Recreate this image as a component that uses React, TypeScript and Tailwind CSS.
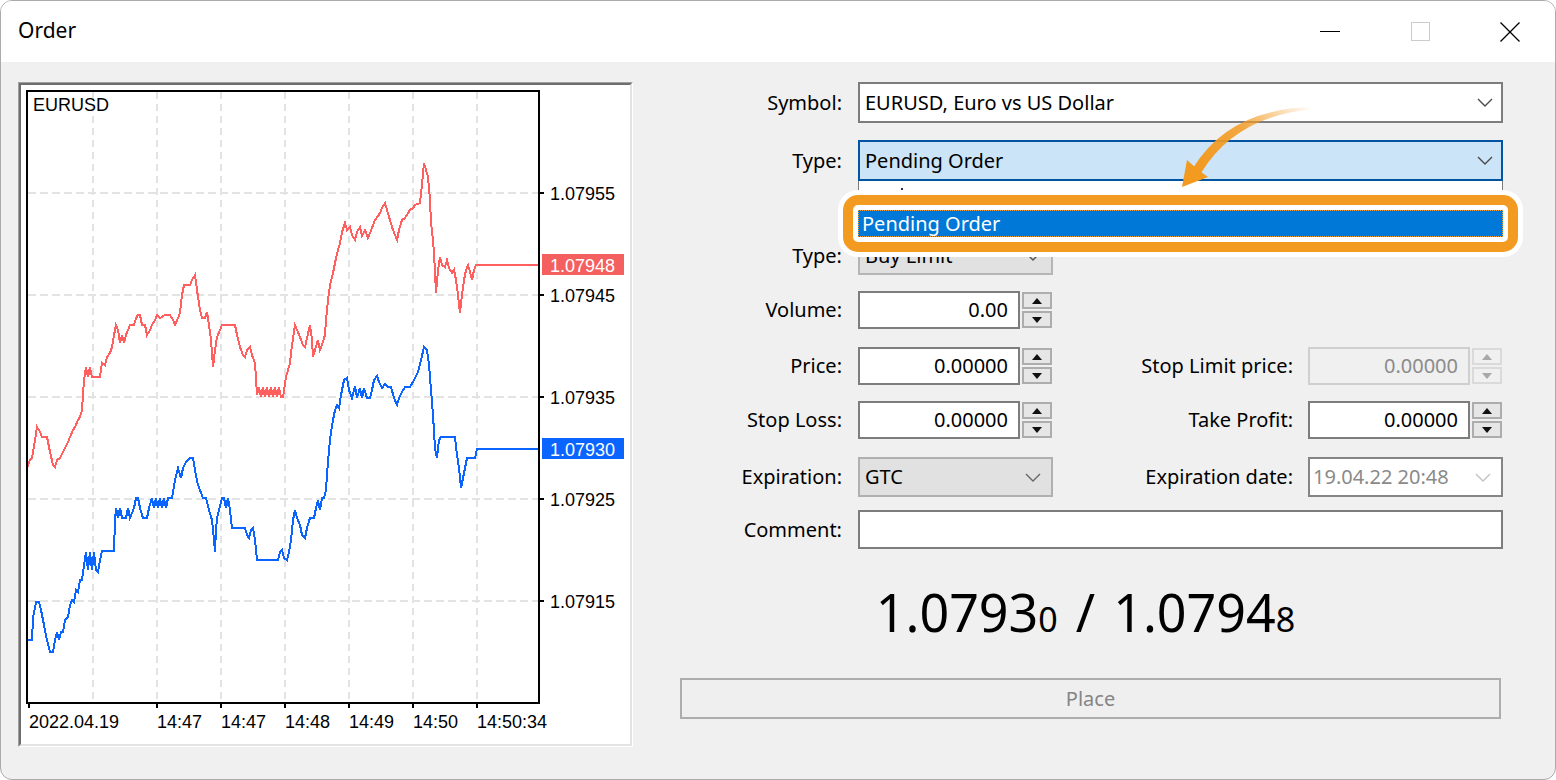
import React from 'react';

type Pt = [number, number];

// traced tick lines (page coordinates)
const blue: Pt[] = [
  [27, 640], [32, 640], [33, 618], [36, 602], [39, 602], [41, 610], [44, 625], [47, 640], [50, 652], [53, 652],
  [55, 640], [57, 632], [59, 640], [61, 632], [63, 632], [65, 620], [68, 617], [70, 605], [72, 600], [74, 602],
  [76, 590], [78, 592], [80, 580], [82, 580], [84, 565], [86, 552], [88, 570], [90, 552], [92, 570], [94, 552],
  [96, 570], [98, 572], [100, 560], [102, 551], [114, 551], [115, 520], [116, 508], [118, 518], [120, 508],
  [122, 518], [126, 518], [128, 508], [130, 518], [134, 508], [136, 498], [138, 498], [140, 508], [143, 518],
  [147, 518], [149, 508], [152, 498], [154, 508], [156, 498], [158, 508], [160, 498], [162, 508], [164, 498],
  [166, 508], [168, 498], [172, 498], [175, 480], [178, 468], [181, 478], [183, 468], [186, 462], [190, 458],
  [193, 458], [195, 470], [198, 485], [200, 490], [203, 498], [206, 498], [209, 510], [212, 520], [214, 540],
  [215, 552], [216, 530], [217, 518], [220, 506], [222, 498], [224, 498], [226, 508], [228, 498], [230, 510],
  [232, 528], [245, 528], [247, 535], [249, 538], [251, 530], [253, 528], [255, 540], [257, 560], [278, 560],
  [280, 552], [282, 550], [284, 558], [287, 560], [289, 552], [291, 540], [293, 520], [295, 510], [297, 518],
  [300, 525], [302, 535], [305, 538], [307, 528], [310, 518], [314, 518], [316, 508], [318, 500], [320, 510],
  [322, 498], [324, 498], [326, 490], [327, 475], [329, 450], [331, 432], [333, 420], [335, 410], [337, 405],
  [339, 408], [341, 395], [344, 380], [347, 378], [349, 390], [352, 398], [355, 386], [357, 398], [360, 388],
  [362, 398], [364, 388], [367, 398], [370, 398], [372, 390], [374, 380], [377, 376], [379, 382], [382, 388],
  [385, 384], [388, 387], [391, 387], [394, 398], [397, 405], [399, 398], [402, 392], [405, 387], [410, 387],
  [414, 380], [418, 372], [421, 360], [424, 347], [427, 350], [429, 365], [431, 390], [433, 415], [435, 448],
  [437, 458], [439, 440], [441, 437], [455, 437], [457, 455], [459, 468], [461, 488], [463, 478], [465, 468],
  [467, 458], [475, 458], [477, 449], [539, 449],
];

const red: Pt[] = [
  [27, 468], [30, 460], [32, 458], [35, 440], [37, 427], [40, 432], [42, 437], [47, 437], [50, 452], [53, 465],
  [55, 467], [57, 460], [60, 458], [63, 452], [65, 448], [68, 442], [70, 437], [73, 430], [75, 427], [78, 420],
  [80, 417], [82, 410], [84, 380], [86, 367], [88, 377], [90, 367], [92, 377], [100, 377], [102, 363], [105, 365],
  [107, 357], [110, 353], [112, 347], [114, 335], [116, 325], [118, 330], [120, 343], [122, 335], [124, 343],
  [126, 335], [128, 330], [130, 325], [134, 325], [136, 318], [138, 315], [140, 315], [142, 325], [145, 325],
  [147, 335], [150, 330], [152, 325], [155, 320], [157, 315], [160, 318], [165, 315], [170, 315], [173, 320],
  [175, 325], [178, 318], [180, 313], [182, 295], [184, 285], [190, 285], [192, 280], [195, 275], [197, 290],
  [200, 310], [202, 318], [205, 318], [207, 312], [209, 325], [211, 340], [213, 367], [215, 350], [217, 337],
  [220, 330], [222, 325], [235, 325], [237, 335], [240, 347], [243, 355], [245, 357], [247, 350], [250, 347],
  [252, 355], [255, 363], [257, 395], [259, 387], [261, 397], [263, 387], [265, 397], [267, 387], [269, 397],
  [271, 387], [273, 397], [275, 387], [277, 397], [279, 387], [281, 397], [283, 397], [286, 377], [288, 370],
  [290, 363], [292, 345], [295, 325], [297, 330], [300, 337], [303, 345], [305, 347], [307, 338], [310, 325],
  [312, 340], [313, 357], [315, 350], [318, 340], [320, 350], [322, 345], [325, 335], [326, 320], [328, 300],
  [330, 285], [333, 273], [336, 258], [338, 250], [340, 243], [342, 232], [345, 223], [347, 230], [350, 227],
  [352, 235], [355, 240], [357, 232], [360, 227], [362, 236], [365, 230], [368, 238], [370, 233], [372, 228],
  [375, 220], [378, 216], [380, 213], [382, 208], [385, 203], [387, 210], [390, 220], [393, 230], [397, 240],
  [399, 230], [402, 220], [405, 218], [408, 213], [410, 210], [413, 208], [415, 205], [420, 203], [422, 185],
  [424, 163], [426, 170], [428, 177], [430, 200], [431, 223], [433, 240], [434, 253], [436, 293], [438, 270],
  [440, 257], [442, 265], [445, 267], [447, 260], [449, 268], [452, 273], [454, 270], [456, 280], [458, 295],
  [460, 313], [462, 295], [464, 280], [466, 270], [468, 265], [470, 272], [472, 280], [474, 270], [476, 265],
  [539, 265],
];

const pts = (a: Pt[]) => a.map((p) => p.join(',')).join(' ');

const vGrid = [93, 157, 221, 285, 349, 413, 477];
const hGrid = [
  { y: 193, label: '1.07955' },
  { y: 295, label: '1.07945' },
  { y: 397, label: '1.07935' },
  { y: 499, label: '1.07925' },
  { y: 601, label: '1.07915' },
];
const times = [
  { x: 29, t: '2022.04.19' },
  { x: 157, t: '14:47' },
  { x: 221, t: '14:47' },
  { x: 285, t: '14:48' },
  { x: 349, t: '14:49' },
  { x: 413, t: '14:50' },
  { x: 477, t: '14:50:34' },
];

const chartFont = "'Liberation Sans', Arial, sans-serif";

const Chart: React.FC = () => (
  <svg width={609} height={659} viewBox="21 85 609 659" className="block">
    {/* grid */}
    {vGrid.map((x) => (
      <line key={x} x1={x} y1={92} x2={x} y2={702} stroke="#e3e3e3" strokeWidth={2} strokeDasharray="7 5" />
    ))}
    {hGrid.map((g) => (
      <line key={g.y} x1={28} y1={g.y} x2={538} y2={g.y} stroke="#e3e3e3" strokeWidth={2} strokeDasharray="8 4" />
    ))}

    <polyline points={pts(red)} fill="none" stroke="#ff5f5f" strokeWidth={2} shapeRendering="crispEdges" />
    <polyline points={pts(blue)} fill="none" stroke="#0a64ff" strokeWidth={2} shapeRendering="crispEdges" />

    {/* frame */}
    <rect x={27} y={91} width={512} height={612} fill="none" stroke="#000" strokeWidth={2} />
    {hGrid.map((g) => (
      <line key={g.y} x1={539} y1={g.y} x2={544} y2={g.y} stroke="#000" strokeWidth={2} />
    ))}
    {times.map((t) => (
      <line key={t.x} x1={t.x} y1={703} x2={t.x} y2={708} stroke="#000" strokeWidth={2} />
    ))}

    <text x={33} y={111} fontFamily={chartFont} fontSize={18} fill="#000">EURUSD</text>

    {hGrid.map((g) => (
      <text key={g.y} x={550} y={g.y + 7} fontFamily={chartFont} fontSize={18} fill="#000">{g.label}</text>
    ))}
    {times.map((t) => (
      <text key={t.x} x={t.x} y={728} fontFamily={chartFont} fontSize={18} fill="#000">{t.t}</text>
    ))}

    <rect x={542} y={254} width={82} height={21} fill="#f45f5f" />
    <text x={550} y={272} fontFamily={chartFont} fontSize={18} fill="#fff">1.07948</text>
    <rect x={542} y={438} width={82} height={21} fill="#0a64ff" />
    <text x={550} y={456} fontFamily={chartFont} fontSize={18} fill="#fff">1.07930</text>
  </svg>
);

const Chevron: React.FC<{ color?: string }> = ({ color = '#4a4a4a' }) => (
  <svg width={16} height={9} viewBox="0 0 16 9" className="shrink-0">
    <polyline points="1,1 8,8 15,1" fill="none" stroke={color} strokeWidth={1.4} />
  </svg>
);

const Tri: React.FC<{ up?: boolean; color: string }> = ({ up, color }) => (
  <svg width={10} height={6} viewBox="0 0 10 6">
    <polygon points={up ? '0,6 5,0 10,6' : '0,0 5,6 10,0'} fill={color} />
  </svg>
);

const Spin: React.FC<{ disabled?: boolean }> = ({ disabled }) => (
  <div className="ml-[2px] w-[30px] h-[36px] flex flex-col gap-[2px]">
    {[true, false].map((up) => (
      <div
        key={String(up)}
        className={
          disabled
            ? 'flex-1 border-2 border-[#dadada] bg-[#f0f0f0] flex items-center justify-center'
            : 'flex-1 border-2 border-[#adadad] bg-[#e6e6e6] flex items-center justify-center'
        }
      >
        <Tri up={up} color={disabled ? '#a8a8a8' : '#111'} />
      </div>
    ))}
  </div>
);

const NumInput: React.FC<{ value: string; disabled?: boolean }> = ({ value, disabled }) => (
  <div className="flex items-center">
    <div
      className={
        disabled
          ? 'w-[162px] h-[38px] border-2 border-[#cfcfcf] bg-[#f0f0f0] text-[#8b8b8b] flex items-center justify-end pr-[10px]'
          : 'w-[162px] h-[38px] border-2 border-[#7d7d7d] bg-white flex items-center justify-end pr-[10px]'
      }
    >
      {value}
    </div>
    <Spin disabled={disabled} />
  </div>
);

const App: React.FC = () => {
  return (
    <div className="w-[1556px] h-[780px] bg-white [font-family:'Noto_Sans',sans-serif] text-black">
      <div className="w-full h-full border border-[#ababab] rounded-[12px] overflow-hidden bg-[#f0f0f0] flex flex-col">
        {/* Title bar */}
        <div className="h-[61px] bg-white flex items-center shrink-0">
          <div className="pl-[17px] text-[21px] leading-none pb-[2px]">Order</div>
          <div className="ml-auto flex h-full">
            <div className="w-[90px] flex items-center justify-center">
              <div className="w-[20px] h-[1px] bg-black" />
            </div>
            <div className="w-[90px] flex items-center justify-center">
              <div className="w-[19px] h-[19px] border border-[#cccccc]" />
            </div>
            <div className="w-[90px] flex items-center justify-center">
              <svg width={20} height={20} viewBox="0 0 20 20">
                <line x1={0.5} y1={0.5} x2={19.5} y2={19.5} stroke="#000" strokeWidth={1.3} />
                <line x1={19.5} y1={0.5} x2={0.5} y2={19.5} stroke="#000" strokeWidth={1.3} />
              </svg>
            </div>
          </div>
        </div>

        {/* Body */}
        <div className="flex pt-[20px] pl-[17px]">
          {/* Chart panel */}
          <div className="w-[615px] h-[665px] border-t border-l border-t-[#a0a0a0] border-l-[#a0a0a0] border-r border-b border-r-white border-b-white">
            <div className="w-full h-full border-t-2 border-l-2 border-t-[#6e6e6e] border-l-[#6e6e6e] border-r-2 border-b-2 border-r-[#e3e3e3] border-b-[#e3e3e3] bg-white">
              <Chart />
            </div>
          </div>

          {/* Form */}
          <div className="ml-[47px] w-[823px] flex flex-col relative text-[20px] leading-none">
            {/* Symbol */}
            <div className="flex items-center h-[41px]">
              <div className="w-[162px] text-right">Symbol:</div>
              <div className="ml-[16px] w-[645px] h-full bg-white border-2 border-[#7d7d7d] flex items-center pl-[5px] pr-[8px]">
                <span className="flex-1">EURUSD, Euro vs US Dollar</span>
                <Chevron />
              </div>
            </div>

            {/* Type (open) */}
            <div className="flex items-center h-[41px] mt-[17px] relative z-10">
              <div className="w-[162px] text-right">Type:</div>
              <div className="ml-[16px] w-[645px] h-full relative">
                <div className="h-full bg-[#cce4f7] border-2 border-[#0054a0] flex items-center pl-[5px] pr-[8px]">
                  <span className="flex-1">Pending Order</span>
                  <Chevron />
                </div>
                <div className="absolute left-0 top-[41px] w-[645px] h-[57px] bg-white border border-t-0 border-[#7a7a7a]">
                  <div className="ml-[42px] mt-[7px] w-[2px] h-[2px] bg-[#2a2a6a]" />
                </div>
                <div className="absolute left-[-20px] top-[50px] w-[685px] bg-white rounded-[20px] p-[5px]">
                  <div className="rounded-[15px] border-[10px] border-[#f39a21] bg-white p-[5px]">
                    <div className="h-[27px] bg-[#0078d7] text-white border border-dotted border-[#f6a13a] flex items-center pl-[3px]">
                      Pending Order
                    </div>
                  </div>
                </div>
              </div>
            </div>

            {/* Type (order type) */}
            <div className="flex items-center h-[38px] mt-[56px]">
              <div className="w-[162px] text-right">Type:</div>
              <div className="ml-[16px] w-[195px] h-full bg-[#e1e1e1] border-2 border-[#b5b5b5] flex items-center pl-[5px] pr-[10px]">
                <span className="flex-1">Buy Limit</span>
                <Chevron color="#555" />
              </div>
            </div>

            {/* Volume */}
            <div className="flex items-center h-[38px] mt-[16px]">
              <div className="w-[162px] text-right">Volume:</div>
              <div className="ml-[16px]">
                <NumInput value="0.00" />
              </div>
            </div>

            {/* Price / Stop Limit */}
            <div className="flex items-center h-[38px] mt-[18px]">
              <div className="w-[162px] text-right">Price:</div>
              <div className="ml-[16px]">
                <NumInput value="0.00000" />
              </div>
              <div className="w-[241px] text-right">Stop Limit price:</div>
              <div className="ml-[15px]">
                <NumInput value="0.00000" disabled />
              </div>
            </div>

            {/* Stop Loss / Take Profit */}
            <div className="flex items-center h-[38px] mt-[16px]">
              <div className="w-[162px] text-right">Stop Loss:</div>
              <div className="ml-[16px]">
                <NumInput value="0.00000" />
              </div>
              <div className="w-[241px] text-right">Take Profit:</div>
              <div className="ml-[15px]">
                <NumInput value="0.00000" />
              </div>
            </div>

            {/* Expiration */}
            <div className="flex items-center h-[40px] mt-[18px]">
              <div className="w-[162px] text-right">Expiration:</div>
              <div className="ml-[16px] w-[195px] h-full bg-[#e1e1e1] border-2 border-[#b0b0b0] flex items-center pl-[5px] pr-[10px]">
                <span className="flex-1">GTC</span>
                <Chevron color="#666" />
              </div>
              <div className="w-[240px] text-right">Expiration date:</div>
              <div className="ml-[15px] w-[195px] h-full bg-white border-2 border-[#858585] flex items-center pl-[3px] pr-[10px] text-[#8a8a8a]">
                <span className="flex-1">19.04.22 20:48</span>
                <Chevron color="#c2c2c2" />
              </div>
            </div>

            {/* Comment */}
            <div className="flex items-center h-[39px] mt-[13px]">
              <div className="w-[162px] text-right">Comment:</div>
              <div className="ml-[16px] w-[645px] h-full bg-white border-2 border-[#7d7d7d]" />
            </div>

            {/* Bid / Ask */}
            <div className="h-[64px] mt-[31px] flex items-center justify-center pr-[12px]">
              <span className="text-[52px] leading-none">
                1.0793<span className="text-[34px]">0</span>
                <span className="mx-[18px]">/</span>
                1.0794<span className="text-[34px]">8</span>
              </span>
            </div>

            {/* Place */}
            <div className="mt-[34px] w-[821px] h-[41px] border-2 border-[#adadad] bg-[#efefef] flex items-center justify-center text-[#858585]">
              Place
            </div>

            {/* arrow */}
            <svg
              className="absolute left-0 top-0 pointer-events-none z-20"
              width={823}
              height={200}
              viewBox="680 82 823 200"
            >
              <defs>
                <linearGradient id="arw" gradientUnits="userSpaceOnUse" x1={1312} y1={108} x2={1200} y2={172}>
                  <stop offset="0" stopColor="#f39a21" stopOpacity={0} />
                  <stop offset="0.55" stopColor="#f39a21" stopOpacity={0.85} />
                  <stop offset="1" stopColor="#f39a21" stopOpacity={1} />
                </linearGradient>
              </defs>
              <path d="M1312,107 Q1229,109 1193,168 L1201,173 Q1236,116 1312,109.5 Z" fill="url(#arw)" />
              <polygon points="1182,187 1187,160 1197,169 1208,177" fill="#f39a21" />
            </svg>
          </div>
        </div>
      </div>
    </div>
  );
};

export default App;
